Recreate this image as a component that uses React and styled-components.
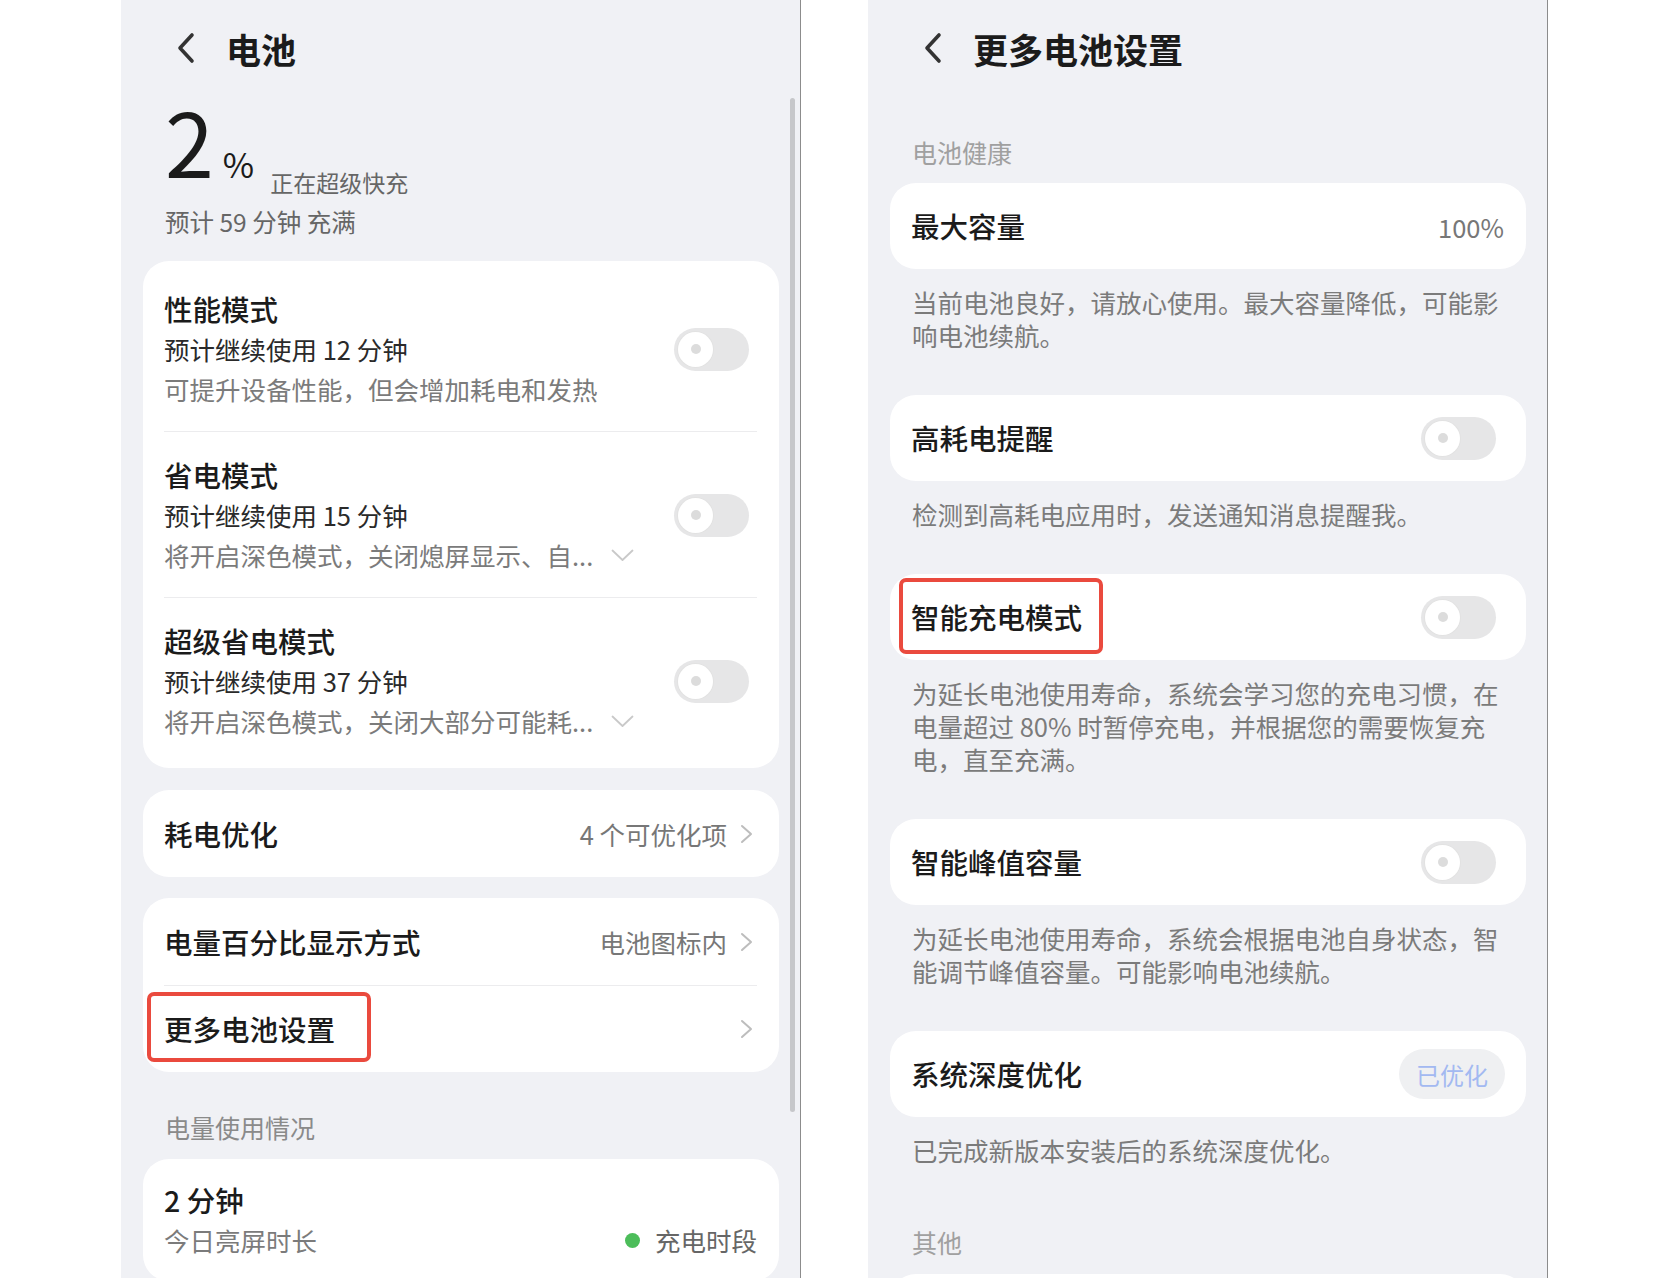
import React from 'react';
import styled, { createGlobalStyle } from 'styled-components';

const GlobalStyle = createGlobalStyle`
  html, body {
    margin: 0;
    padding: 0;
    background: #ffffff;
  }
  body {
    font-family: "Noto Sans CJK SC", "Noto Sans", sans-serif;
    color: #1b1b1b;
  }
`;

const BackIcon = () => (
  <svg width="19" height="32" viewBox="0 0 19 32" fill="none">
    <path d="M16 3 L4 16 L16 29" stroke="#333" strokeWidth="3.6" strokeLinecap="round" strokeLinejoin="round" />
  </svg>
);

const ChevronRight = () => (
  <ChevronSvg width="13" height="20" viewBox="0 0 13 20" fill="none">
    <path d="M2 2 L11 10 L2 18" stroke="#bdbdbd" strokeWidth="2" strokeLinecap="round" strokeLinejoin="round" />
  </ChevronSvg>
);

const ChevronDown = () => (
  <ExpandSvg width="23" height="13" viewBox="0 0 23 13" fill="none">
    <path d="M1.5 1.5 L11.5 11 L21.5 1.5" stroke="#c9c9c9" strokeWidth="1.8" strokeLinecap="round" strokeLinejoin="round" />
  </ExpandSvg>
);

const Switch = () => (
  <Track>
    <Knob />
  </Track>
);

const App = () => {
  return (
    <Page>
      <GlobalStyle />

      {/* 电池 */}
      <Screen>
        <ScrollBar />
        <TopBar>
          <BackIcon />
          <PageTitle>电池</PageTitle>
        </TopBar>

        <Summary>
          <Level>
            2<Pct>%</Pct>
            <Status>正在超级快充</Status>
          </Level>
          <Eta>预计 59 分钟 充满</Eta>
        </Summary>

        <Card $top={22} $pad="5px 0">
          <ModeRow>
            <RowText>
              <RowTitle>性能模式</RowTitle>
              <RowLine>预计继续使用 12 分钟</RowLine>
              <RowLine $muted>可提升设备性能，但会增加耗电和发热</RowLine>
            </RowText>
            <Switch />
          </ModeRow>
          <Divider />
          <ModeRow>
            <RowText>
              <RowTitle>省电模式</RowTitle>
              <RowLine>预计继续使用 15 分钟</RowLine>
              <RowLine $muted>将开启深色模式，关闭熄屏显示、自...<ChevronDown /></RowLine>
            </RowText>
            <Switch />
          </ModeRow>
          <Divider />
          <ModeRow>
            <RowText>
              <RowTitle>超级省电模式</RowTitle>
              <RowLine>预计继续使用 37 分钟</RowLine>
              <RowLine $muted>将开启深色模式，关闭大部分可能耗...<ChevronDown /></RowLine>
            </RowText>
            <Switch />
          </ModeRow>
        </Card>

        <Card $top={22}>
          <NavRow $h={87}>
            <RowTitle>耗电优化</RowTitle>
            <Value>4 个可优化项</Value>
            <ChevronRight />
          </NavRow>
        </Card>

        <Card $top={21}>
          <NavRow $h={87}>
            <RowTitle>电量百分比显示方式</RowTitle>
            <Value>电池图标内</Value>
            <ChevronRight />
          </NavRow>
          <Divider />
          <NavRow $h={86}>
            <RowTitle>
              <Marked $inset="-17px -36px -13px -17px">更多电池设置</Marked>
            </RowTitle>
            <Value />
            <ChevronRight />
          </NavRow>
        </Card>

        <GroupLabel $top={37} $tone="#8a8a8a">电量使用情况</GroupLabel>

        <Card $top={14} $pad="21px 22px 21px 21px">
          <RowTitle>2 分钟</RowTitle>
          <UsageLine>
            <RowLine $muted>今日亮屏时长</RowLine>
            <Legend>
              <Dot />
              充电时段
            </Legend>
          </UsageLine>
        </Card>
      </Screen>

      {/* 更多电池设置 */}
      <Screen>
        <TopBar>
          <BackIcon />
          <PageTitle>更多电池设置</PageTitle>
        </TopBar>

        <GroupLabel $top={38} $tone="#a0a0a0">电池健康</GroupLabel>

        <Card $top={13}>
          <NavRow $h={86} $right={22}>
            <RowTitle>最大容量</RowTitle>
            <Value>100%</Value>
          </NavRow>
        </Card>
        <Note>当前电池良好，请放心使用。最大容量降低，可能影响电池续航。</Note>

        <Card>
          <NavRow $h={86} $right={30}>
            <RowTitle>高耗电提醒</RowTitle>
            <Spacer />
            <Switch />
          </NavRow>
        </Card>
        <Note>检测到高耗电应用时，发送通知消息提醒我。</Note>

        <Card>
          <NavRow $h={86} $right={30}>
            <RowTitle>
              <Marked $inset="-19px -21px -17px -12px">智能充电模式</Marked>
            </RowTitle>
            <Spacer />
            <Switch />
          </NavRow>
        </Card>
        <Note>为延长电池使用寿命，系统会学习您的充电习惯，在电量超过 80% 时暂停充电，并根据您的需要恢复充电，直至充满。</Note>

        <Card>
          <NavRow $h={86} $right={30}>
            <RowTitle>智能峰值容量</RowTitle>
            <Spacer />
            <Switch />
          </NavRow>
        </Card>
        <Note>为延长电池使用寿命，系统会根据电池自身状态，智能调节峰值容量。可能影响电池续航。</Note>

        <Card>
          <NavRow $h={86} $right={21}>
            <RowTitle>系统深度优化</RowTitle>
            <Badge>已优化</Badge>
          </NavRow>
        </Card>
        <Note $after={0}>已完成新版本安装后的系统深度优化。</Note>

        <GroupLabel $top={58} $tone="#a0a0a0">其他</GroupLabel>
        <Card $top={14}>
          <NavRow $h={86} />
        </Card>
      </Screen>
    </Page>
  );
};

const Page = styled.div`
  display: flex;
  gap: 67px;
  padding-left: 121px;
  height: 1278px;
  overflow: hidden;
`;

const Screen = styled.div`
  position: relative;
  flex: none;
  box-sizing: border-box;
  width: 680px;
  height: 100%;
  background: #f0f1f5;
  border-right: 1px solid #8c8c8c;
  overflow: hidden;
`;

const ScrollBar = styled.div`
  position: absolute;
  top: 98px;
  right: 5px;
  width: 5px;
  height: 1014px;
  border-radius: 3px;
  background: #c6c7ca;
`;

const TopBar = styled.div`
  display: flex;
  align-items: center;
  gap: 31px;
  height: 96px;
  padding-left: 55px;
`;

const PageTitle = styled.h1`
  margin: 0;
  font-size: 35px;
  font-weight: 600;
  line-height: 1;
  color: #1b1b1b;
`;

const Summary = styled.div`
  padding-left: 44px;
`;

const Level = styled.div`
  font-size: 88px;
  line-height: 1;
  font-weight: 400;
  color: #1b1b1b;
  white-space: nowrap;
`;

const Pct = styled.span`
  font-size: 34px;
  margin-left: 9px;
`;

const Status = styled.span`
  font-size: 23px;
  line-height: 1;
  color: #666;
  margin-left: 16px;
  vertical-align: -14px;
`;

const Eta = styled.div`
  margin-top: 11px;
  font-size: 24.5px;
  line-height: 34px;
  color: #666;
`;

const Card = styled.div`
  position: relative;
  margin: ${p => p.$top ?? 44}px 21px 0 22px;
  padding: ${p => p.$pad || '0'};
  background: #ffffff;
  border-radius: 26px;
`;

const ModeRow = styled.div`
  display: flex;
  align-items: center;
  padding: 23px 30px 22px 21px;
`;

const RowText = styled.div`
  flex: 1;
  min-width: 0;
`;

const RowTitle = styled.div`
  font-size: 28.5px;
  font-weight: 500;
  line-height: 40px;
  color: #1b1b1b;
  white-space: nowrap;
`;

const RowLine = styled.div`
  display: flex;
  align-items: center;
  font-size: 25.5px;
  line-height: 40px;
  color: ${p => (p.$muted ? '#7b7b7b' : '#2a2a2a')};
  white-space: nowrap;
`;

const ExpandSvg = styled.svg`
  margin-left: 18px;
  flex: none;
`;

const Divider = styled.div`
  height: 1px;
  margin: 0 22px 0 21px;
  background: #ececee;
`;

const Track = styled.div`
  flex: none;
  box-sizing: border-box;
  display: flex;
  align-items: center;
  width: 75px;
  height: 43px;
  padding-left: 4px;
  border-radius: 22px;
  background: #e6e6e7;
`;

const Knob = styled.div`
  display: flex;
  align-items: center;
  justify-content: center;
  width: 35px;
  height: 35px;
  border-radius: 50%;
  background: #ffffff;
  box-shadow: 0 0 0 1px #e2e2e2;

  &::after {
    content: '';
    width: 10px;
    height: 10px;
    border-radius: 50%;
    background: #dcdcdc;
  }
`;

const NavRow = styled.div`
  display: flex;
  align-items: center;
  height: ${p => p.$h}px;
  padding: 0 ${p => p.$right ?? 26}px 0 21px;
`;

const Value = styled.span`
  margin-left: auto;
  font-size: 25.5px;
  color: #777;
  white-space: nowrap;
`;

const Spacer = styled.div`
  flex: 1;
`;

const ChevronSvg = styled.svg`
  flex: none;
  margin-left: 13px;
`;

const Marked = styled.span`
  position: relative;
  display: inline-block;

  &::after {
    content: '';
    position: absolute;
    inset: ${p => p.$inset};
    border: 4px solid #ea4a3e;
    border-radius: 7px;
  }
`;

const GroupLabel = styled.div`
  margin-top: ${p => p.$top}px;
  padding-left: 44px;
  font-size: 25px;
  line-height: 36px;
  color: ${p => p.$tone};
`;

const UsageLine = styled.div`
  display: flex;
  align-items: center;
  justify-content: space-between;
`;

const Legend = styled.span`
  display: flex;
  align-items: center;
  gap: 15px;
  font-size: 25.5px;
  line-height: 40px;
  color: #666;
`;

const Dot = styled.span`
  width: 15px;
  height: 15px;
  border-radius: 50%;
  background: #4cbd5a;
`;

const Note = styled.p`
  margin: 16px 0 ${p => p.$after ?? 44}px;
  padding: 0 43px 0 44px;
  font-size: 25.5px;
  line-height: 33px;
  color: #7b7b7b;
`;

const Badge = styled.span`
  display: flex;
  align-items: center;
  margin-left: auto;
  height: 50px;
  padding: 0 17px;
  border-radius: 25px;
  background: #eff0f2;
  font-size: 24px;
  color: #a3b9f1;
`;

export default App;
